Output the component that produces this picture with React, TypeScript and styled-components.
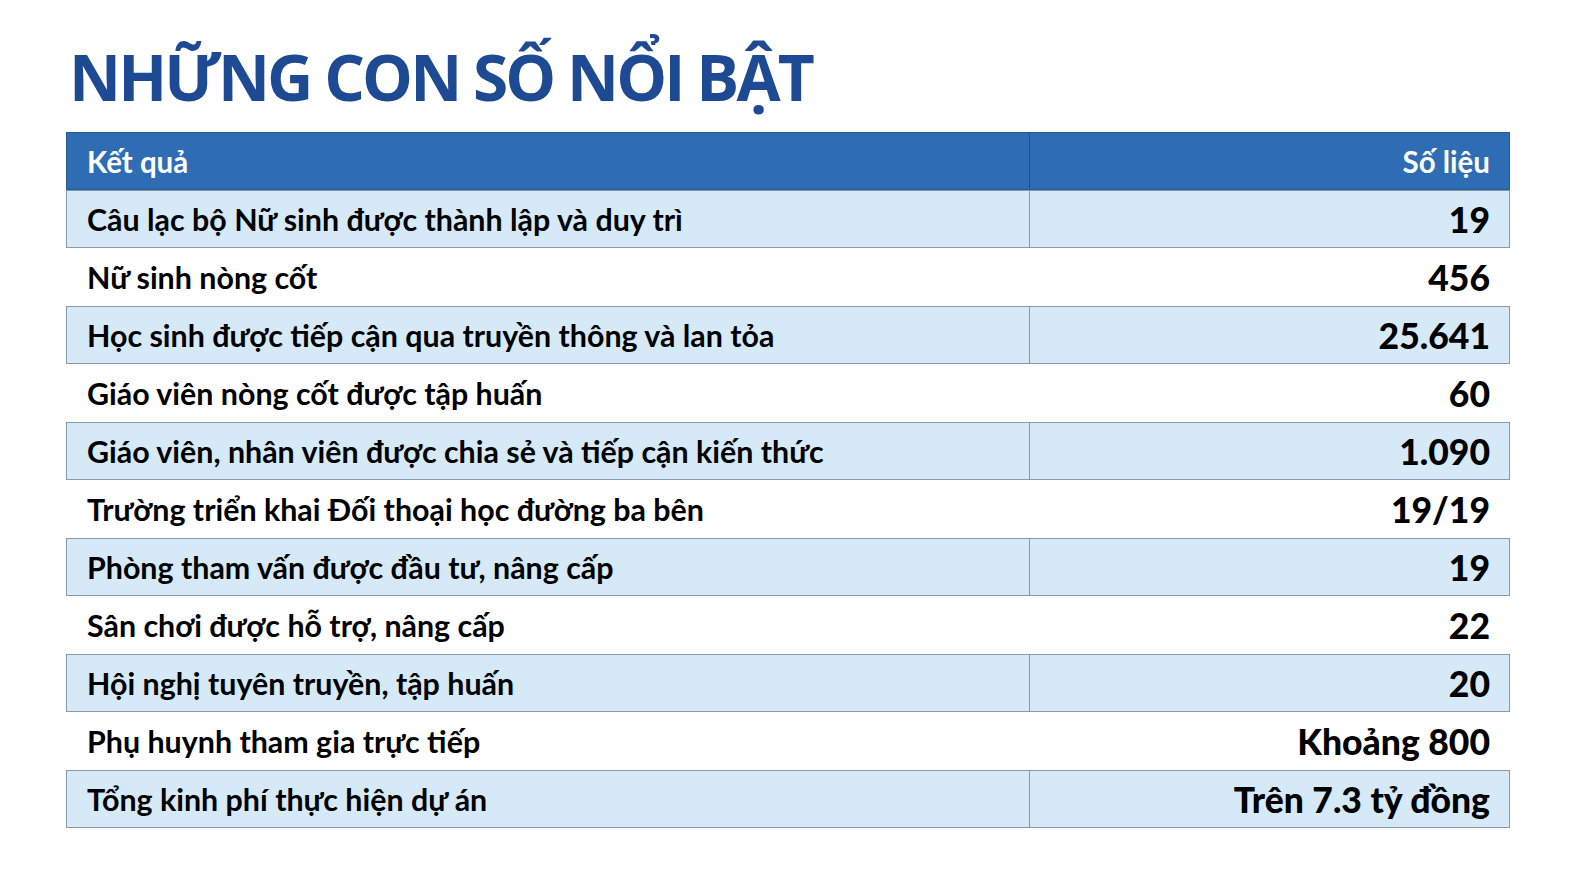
import React from "react";
import styled, { createGlobalStyle } from "styled-components";

const Global = createGlobalStyle`
  html, body { margin: 0; padding: 0; background: #ffffff; }
  body { width: 1588px; height: 872px; overflow: hidden; }
`;

const Page = styled.div`
  padding: 40px 78px 0 66px;
  font-family: "Lato", "Liberation Sans", sans-serif;
`;

const Title = styled.h1`
  margin: 0 0 18px 3px;
  font-family: "Open Sans", "Noto Sans", sans-serif;
  font-weight: 700;
  font-size: 64px;
  line-height: 74px;
  color: #1e4a93;
  letter-spacing: -2.9px;
`;

const Table = styled.div`
  display: grid;
  grid-template-columns: 963px 481px;
  width: 1444px;
`;

const HeadCell = styled.div<{ $right?: boolean }>`
  height: 58px;
  box-sizing: border-box;
  background: #2e6db4;
  border: 1px solid #255a96;
  ${(p) => (p.$right ? "border-left: 1px solid #1f5089;" : "border-right: 0;")}
  color: #ffffff;
  font-weight: 700;
  font-size: 29.5px;
  display: flex;
  align-items: center;
  justify-content: ${(p) => (p.$right ? "flex-end" : "flex-start")};
  padding: 0 ${(p) => (p.$right ? "19px" : "20px")};
`;

const Cell = styled.div<{ $shaded: boolean; $right?: boolean }>`
  height: 58px;
  box-sizing: border-box;
  background: ${(p) => (p.$shaded ? "#d6e9f7" : "#ffffff")};
  border: 1px solid ${(p) => (p.$shaded ? "#8799ad" : "transparent")};
  ${(p) => (p.$right ? "" : "border-right: 0;")}
  color: #000000;
  font-weight: ${(p) => (p.$right ? 900 : 700)};
  font-size: ${(p) => (p.$right ? "35.5px" : "30.4px")};
  display: flex;
  align-items: center;
  justify-content: ${(p) => (p.$right ? "flex-end" : "flex-start")};
  padding: 0 ${(p) => (p.$right ? "19px" : "20px")};
  white-space: nowrap;
`;

const rows: [string, string][] = [
  ["Câu lạc bộ Nữ sinh được thành lập và duy trì", "19"],
  ["Nữ sinh nòng cốt", "456"],
  ["Học sinh được tiếp cận qua truyền thông và lan tỏa", "25.641"],
  ["Giáo viên nòng cốt được tập huấn", "60"],
  ["Giáo viên, nhân viên được chia sẻ và tiếp cận kiến thức", "1.090"],
  ["Trường triển khai Đối thoại học đường ba bên", "19/19"],
  ["Phòng tham vấn được đầu tư, nâng cấp", "19"],
  ["Sân chơi được hỗ trợ, nâng cấp", "22"],
  ["Hội nghị tuyên truyền, tập huấn", "20"],
  ["Phụ huynh tham gia trực tiếp", "Khoảng 800"],
  ["Tổng kinh phí thực hiện dự án", "Trên 7.3 tỷ đồng"],
];

export default function App() {
  return (
    <>
      <Global />
      <Page>
        <Title>NHỮNG CON SỐ NỔI BẬT</Title>
        <Table>
          <HeadCell>Kết quả</HeadCell>
          <HeadCell $right>Số liệu</HeadCell>
          {rows.map(([label, value], i) => (
            <React.Fragment key={label}>
              <Cell $shaded={i % 2 === 0}>{label}</Cell>
              <Cell $shaded={i % 2 === 0} $right>
                {value}
              </Cell>
            </React.Fragment>
          ))}
        </Table>
      </Page>
    </>
  );
}
